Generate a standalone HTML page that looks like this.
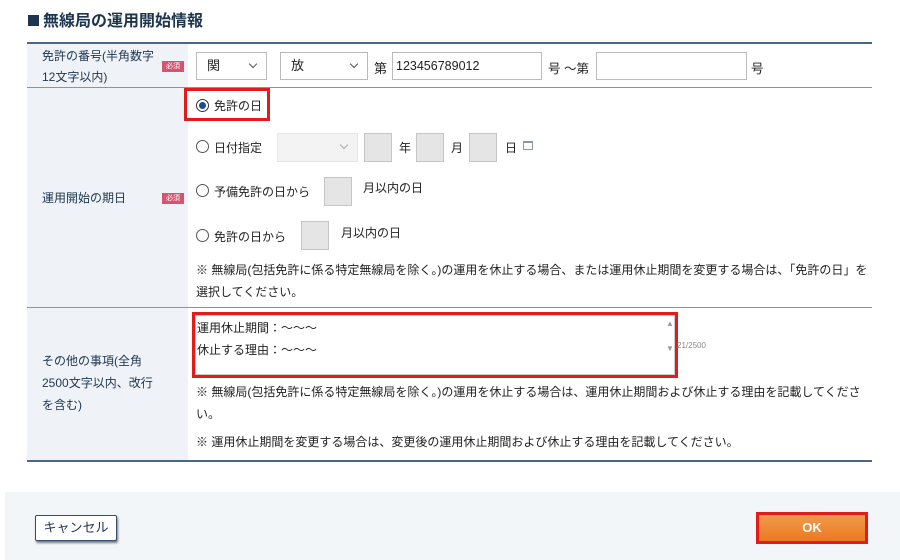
<!DOCTYPE html>
<html><head><meta charset="utf-8"><style>
*{box-sizing:border-box;margin:0;padding:0}
body{width:900px;height:560px;background:#fff;font-family:"Liberation Sans","Noto Sans CJK JP",sans-serif;font-size:12px;color:#222;position:relative;overflow:hidden}
.a{position:absolute;white-space:nowrap}
.lbl{position:absolute;left:27px;width:161px;background:#eff3f7}
.req{position:absolute;left:162px;width:22px;height:11px;background:#d9536f;color:#fff;font-size:7px;line-height:11px;text-align:center}
.hl{position:absolute;left:27px;width:845px;height:1px;background:#7f97ad}
.sel{position:absolute;border:1px solid #bbb;background:#fff;height:28px;padding:0 10px;line-height:26px;font-size:13px}
.sel i{position:absolute;right:10px;top:8px;width:6px;height:6px;border-right:1px solid #555;border-bottom:1px solid #555;transform:rotate(45deg)}
.inp{position:absolute;border:1px solid #bbb;background:#fff;height:28px;line-height:26px;padding-left:3px;font-size:12.5px}
.gb{position:absolute;background:#e5e5e5;border:1px solid #c5c5c5;width:28px;height:28px}
.rad{position:absolute;width:13px;height:13px;border:1px solid #555;border-radius:50%;background:#fff}
.red{position:absolute;border:3px solid #e31b1b}
</style></head><body>
<div class="a" style="left:28px;top:7px;font-size:16px;font-weight:bold;color:#1e3550"><span style="display:inline-block;width:11px;height:11px;background:#1e3550;margin-right:4px"></span>無線局の運用開始情報</div>
<div class="lbl" style="top:43px;height:44px"></div>
<div class="lbl" style="top:87px;height:220px"></div>
<div class="lbl" style="top:307px;height:154px"></div>
<div class="a" style="left:27px;top:42px;width:845px;height:2px;background:#4a6787"></div>
<div class="hl" style="top:87px"></div>
<div class="hl" style="top:307px"></div>
<div class="a" style="left:27px;top:460px;width:845px;height:2px;background:#4a6787"></div>

<div class="a" style="left:42px;top:46px;line-height:21px;color:#1e3550">免許の番号(半角数字<br>12文字以内)</div>
<div class="req" style="top:61px">必須</div>
<div class="a" style="left:42px;top:189px;color:#1e3550">運用開始の期日</div>
<div class="req" style="top:193px">必須</div>
<div class="a" style="left:42px;top:350px;line-height:22px;color:#1e3550">その他の事項(全角<br>2500文字以内、改行<br>を含む)</div>

<div class="sel" style="left:196px;top:52px;width:71px">関<i></i></div>
<div class="sel" style="left:280px;top:52px;width:88px">放<i></i></div>
<div class="a" style="left:374px;top:58px;font-size:13px">第</div>
<div class="inp" style="left:392px;top:52px;width:150px">123456789012</div>
<div class="a" style="left:548px;top:58px;font-size:12.5px">号 ～第</div>
<div class="inp" style="left:596px;top:52px;width:151px"></div>
<div class="a" style="left:751px;top:58px;font-size:12.5px">号</div>

<div class="red" style="left:184px;top:88px;width:86px;height:33px"></div>
<div class="rad" style="left:196px;top:99px;border-color:#333"><div style="position:absolute;left:2px;top:2px;width:7px;height:7px;border-radius:50%;background:#1e4d8c"></div></div>
<div class="a" style="left:214px;top:97px">免許の日</div>

<div class="rad" style="left:196px;top:140px"></div>
<div class="a" style="left:214px;top:139px">日付指定</div>
<div class="a" style="left:277px;top:133px;width:81px;height:29px;background:#f3f3f3;border:1px solid #e6e6e6"><i style="position:absolute;right:10px;top:8px;width:6px;height:6px;border-right:1px solid #aaa;border-bottom:1px solid #aaa;transform:rotate(45deg)"></i></div>
<div class="gb" style="left:364px;top:133px;height:29px"></div>
<div class="a" style="left:399px;top:139px">年</div>
<div class="gb" style="left:416px;top:133px;height:29px"></div>
<div class="a" style="left:451px;top:139px">月</div>
<div class="gb" style="left:469px;top:133px;height:29px"></div>
<div class="a" style="left:505px;top:139px">日</div>
<div class="a" style="left:523px;top:141px;width:10px;height:9px;border:1px solid #8a97a8;border-top-width:2px"></div>

<div class="rad" style="left:196px;top:184px"></div>
<div class="a" style="left:214px;top:183px">予備免許の日から</div>
<div class="gb" style="left:324px;top:177px;height:29px"></div>
<div class="a" style="left:363px;top:179px">月以内の日</div>

<div class="rad" style="left:196px;top:229px"></div>
<div class="a" style="left:214px;top:228px">免許の日から</div>
<div class="gb" style="left:301px;top:221px;height:29px"></div>
<div class="a" style="left:341px;top:224px">月以内の日</div>

<div class="a" style="left:196px;top:259px;line-height:22px">※ 無線局(包括免許に係る特定無線局を除く。)の運用を休止する場合、または運用休止期間を変更する場合は、「免許の日」を<br>選択してください。</div>

<div class="red" style="left:192px;top:312px;width:486px;height:66px"></div>
<div class="a" style="left:195px;top:315px;width:480px;height:60px;background:#fff;border:1px solid #ccc"></div>
<div class="a" style="left:197px;top:317px;line-height:22px">運用休止期間：～～～<br>休止する理由：～～～</div>
<div class="a" style="left:666px;top:319px;font-size:8px;color:#999">▲</div>
<div class="a" style="left:666px;top:344px;font-size:8px;color:#999">▼</div>
<div class="a" style="left:677px;top:341px;font-size:8px;color:#888">21/2500</div>

<div class="a" style="left:196px;top:381px;line-height:22px">※ 無線局(包括免許に係る特定無線局を除く。)の運用を休止する場合は、運用休止期間および休止する理由を記載してくださ<br>い。</div>
<div class="a" style="left:196px;top:433px">※ 運用休止期間を変更する場合は、変更後の運用休止期間および休止する理由を記載してください。</div>

<div class="a" style="left:5px;top:492px;width:895px;height:68px;background:#f3f6f9"></div>
<div class="a" style="left:35px;top:515px;width:82px;height:26px;background:#fff;border:1px solid #34506e;border-radius:2px;box-shadow:1px 2px 2px #777;font-size:13px;line-height:24px;text-align:center;color:#1e3550">キャンセル</div>
<div class="a" style="left:756px;top:512px;width:112px;height:32px;background:#e31b1b;padding:3px"><div style="width:100%;height:100%;background:linear-gradient(#f29a4a,#ea7a22);color:#fff;font-weight:bold;font-size:13px;text-align:center;line-height:26px">OK</div></div>
</body></html>
